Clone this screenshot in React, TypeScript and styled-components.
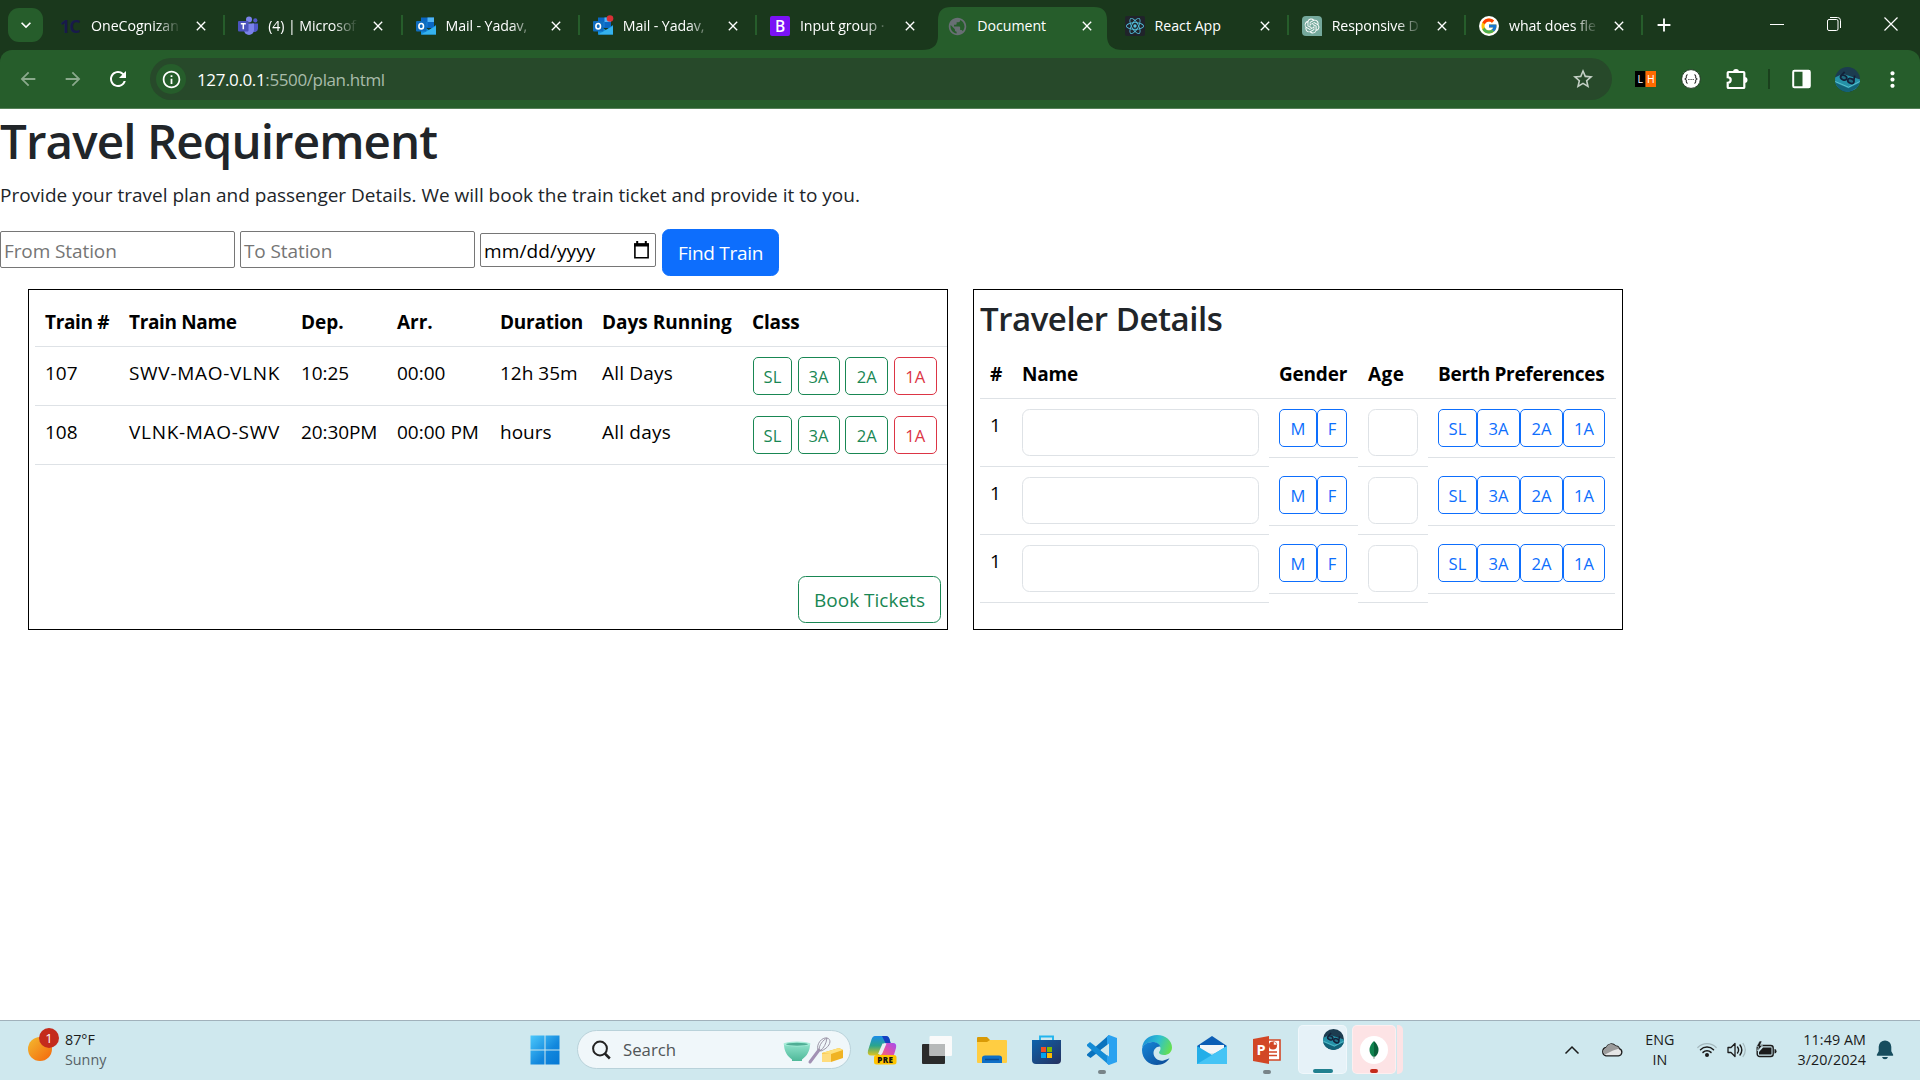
import React from "react";
import styled, { createGlobalStyle, css } from "styled-components";
import {
  MdAdd,
  MdArrowBack,
  MdArrowForward,
  MdClose,
  MdInfoOutline,
  MdKeyboardArrowDown,
  MdMoreVert,
  MdPublic,
  MdRefresh,
  MdStarOutline,
} from "react-icons/md";
import { FcGoogle } from "react-icons/fc";
import { SiOpenai, SiReact } from "react-icons/si";

const GlobalStyle = createGlobalStyle`
  *, *::before, *::after { box-sizing: border-box; }
  body { margin: 0; background: #fff; overflow: hidden; }
  svg { display: block; flex: none; overflow: visible; }
`;

const Screen = styled.div`
  display: flex;
  flex-direction: column;
  width: 1920px;
  height: 1080px;
  font-family: "Open Sans", "Noto Sans", sans-serif;
  color: #212529;
  white-space: nowrap;
`;

const Txt = styled.span<{ $track?: number }>`
  letter-spacing: ${(p) => p.$track ?? 0}px;
`;

/* ---------- browser chrome ---------- */

const TabStrip = styled.div`
  display: flex;
  align-items: flex-start;
  height: 50px;
  flex: none;
  padding-left: 8px;
  background: #1a381c;
  color: #fff;
`;

const TabSearch = styled.div`
  display: grid;
  place-items: center;
  width: 35px;
  height: 34px;
  margin: 8px 5px 0 0;
  border-radius: 11px;
  background: #265d2b;
`;

const Tab = styled.div<{ $divider?: boolean }>`
  position: relative;
  display: flex;
  align-items: center;
  width: 177.25px;
  height: 50px;
  padding: 1px 0 0 13px;
  flex: none;
  ${(p) =>
    p.$divider &&
    css`
      &::after {
        content: "";
        position: absolute;
        right: 0;
        top: 15px;
        width: 2px;
        height: 20px;
        background: #265d2b;
      }
    `}
`;

const ActiveShape = styled.svg`
  position: absolute;
  left: -12px;
  top: 7px;
`;

const Favicon = styled.div`
  position: relative;
  display: grid;
  place-items: center;
  width: 20px;
  height: 20px;
  margin-right: 10px;
`;

const TabTitle = styled.div<{ $fade?: boolean; $track?: number }>`
  position: relative;
  width: 90px;
  font-size: 14.2px;
  line-height: 20px;
  letter-spacing: ${(p) => p.$track ?? -0.2}px;
  ${(p) =>
    p.$fade &&
    css`
      mask-image: linear-gradient(90deg, #000 72%, transparent 100%);
    `}
`;

const TabClose = styled.div`
  position: relative;
  margin-left: 12px;
`;

const NewTab = styled.div`
  padding: 14px 0 0 10px;
`;

const WindowButtons = styled.div`
  display: flex;
  align-items: center;
  gap: 43px;
  margin-left: auto;
  padding: 17px 22px 0 0;
`;

const Toolbar = styled.div`
  display: flex;
  align-items: center;
  height: 59px;
  flex: none;
  border-bottom: 1px solid #568159;
  color: #fff;
  background: #265d2b;
`;

const ToolbarBack = styled.div`
  flex: none;
  background: #1a381c;

  & > div {
    clip-path: inset(0 round 12px 12px 0 0);
  }
`;

const NavButton = styled.div<{ $dim?: boolean }>`
  display: grid;
  place-items: center;
  width: 45px;
  color: ${(p) => (p.$dim ? "#8aa98c" : "#fff")};
`;

const Omnibox = styled.div`
  display: flex;
  align-items: center;
  width: 1462px;
  height: 42px;
  margin-left: 10px;
  padding: 0 17px 0 6px;
  border-radius: 21px;
  background: #27492a;
  font-size: 17px;
`;

const InfoChip = styled.div`
  display: grid;
  place-items: center;
  width: 30px;
  height: 30px;
  margin-right: 11px;
  border-radius: 50%;
  background: #265d2b;
`;

const UrlDim = styled.span`
  color: #a9bcaa;
`;

const StarSlot = styled.div`
  margin-left: auto;
  color: #c3cfc4;
`;

const Extensions = styled.div`
  display: flex;
  align-items: center;
  padding-left: 23px;
`;

const Gap = styled.div<{ $w: number }>`
  width: ${(p) => p.$w}px;
`;

const ToolbarRule = styled.div`
  width: 2px;
  height: 20px;
  background: #1a401d;
`;

/* ---------- page ---------- */

const Page = styled.main`
  flex: 1;
  min-height: 0;
  background: #fff;
`;

const Heading = styled.h1`
  margin: 0 0 10px;
  height: 60px;
  font-size: 47.5px;
  font-weight: 600;
  line-height: 63px;
  letter-spacing: -0.9px;
`;

const Lead = styled.p`
  margin: 0 0 20px;
  height: 30px;
  font-size: 19px;
  line-height: 33px;
`;

const SearchRow = styled.div`
  display: flex;
  align-items: flex-start;
  height: 47px;
`;

const StationField = styled.div`
  width: 235px;
  height: 37px;
  margin: 2px 5px 0 0;
  padding-left: 3px;
  border: 1px solid #767676;
  border-radius: 2px;
  font-size: 19px;
  line-height: 38px;
  letter-spacing: -0.1px;
  color: #757575;
`;

const DateField = styled.div`
  display: flex;
  align-items: center;
  justify-content: space-between;
  width: 176px;
  height: 34px;
  margin: 4px 6px 0 0;
  padding: 0 5px 0 3px;
  border: 1px solid #767676;
  border-radius: 2px;
  font-size: 19px;
  line-height: 32px;
  letter-spacing: 0.1px;
  color: #000;
`;

const DateText = styled.span`
  padding-top: 2px;
`;

const Button = styled.button<{ $tone: "primary" | "green" | "red" | "blue"; $small?: boolean; $w: number }>`
  flex: none;
  display: block;
  width: ${(p) => p.$w}px;
  height: ${(p) => (p.$small ? 38 : 47)}px;
  padding: 2px 0 0;
  border: 1px solid
    ${(p) => ({ primary: "#0d6efd", blue: "#0d6efd", green: "#198754", red: "#dc3545" })[p.$tone]};
  border-radius: ${(p) => (p.$small ? 5 : 7.5)}px;
  background: ${(p) => (p.$tone === "primary" ? "#0d6efd" : "transparent")};
  color: ${(p) => ({ primary: "#fff", blue: "#0d6efd", green: "#198754", red: "#dc3545" })[p.$tone]};
  font-family: inherit;
  font-size: ${(p) => (p.$small ? 16.6 : 19)}px;
  letter-spacing: ${(p) => (p.$tone === "primary" ? -0.3 : 0)}px;
  line-height: 1.5;
  text-align: center;
`;

const Panels = styled.div`
  display: flex;
  gap: 25px;
  padding: 13px 0 0 28px;
`;

const Panel = styled.section<{ $w: number }>`
  display: flex;
  flex-direction: column;
  width: ${(p) => p.$w}px;
  height: 341px;
  padding: 6px;
  border: 1px solid #000;
`;

const TrainRow = styled.div<{ $head?: boolean }>`
  display: grid;
  grid-template-columns: 84px 172px 96px 103px 102px 150px 205px;
  width: 912px;
  height: ${(p) => (p.$head ? 51 : 59)}px;
  padding-top: 10px;
  border-bottom: 1px solid #dee2e6;
  color: #000;
  font-size: 19px;
  font-weight: ${(p) => (p.$head ? 700 : 400)};
  line-height: 33px;
`;

const TrainCell = styled.div`
  padding-left: 10px;
`;

const ClassButtons = styled.div`
  display: flex;
  gap: 5.6px;
  padding-left: 11px;
`;

const PanelFooter = styled.div`
  display: flex;
  justify-content: flex-end;
  margin-top: auto;
`;

const PanelTitle = styled.h3`
  margin: 0 0 10px;
  height: 42px;
  font-size: 33px;
  font-weight: 600;
  line-height: 45px;
  letter-spacing: -0.45px;
`;

const TravelerRow = styled.div<{ $head?: boolean }>`
  display: grid;
  grid-template-columns: 32px 257px 89px 70px 187px;
  align-items: start;
  height: ${(p) => (p.$head ? 51 : 68)}px;
  color: #000;
  font-size: 19px;
  line-height: 33px;
  ${(p) =>
    p.$head &&
    css`
      padding-top: 10px;
      border-bottom: 1px solid #dee2e6;
      font-weight: 700;
    `}
`;

const HeadCell = styled.div`
  padding-left: 10px;
`;

const TravelerCell = styled.div<{ $short?: boolean; $top?: number }>`
  display: flex;
  height: ${(p) => (p.$short ? 59 : 68)}px;
  padding: ${(p) => p.$top ?? 10}px 0 0 10px;
  border-bottom: 1px solid #dee2e6;
`;

const RoundedInput = styled.div<{ $w: number }>`
  width: ${(p) => p.$w}px;
  height: 47px;
  border: 1px solid #dee2e6;
  border-radius: 7.5px;
`;

/* ---------- taskbar ---------- */

const Taskbar = styled.footer`
  display: flex;
  align-items: center;
  height: 60px;
  flex: none;
  padding-bottom: 2px;
  border-top: 1px solid #a1b1bb;
  background: #cfe8ee;
  font-size: 14.3px;
  color: #1b1b1b;
`;

const Weather = styled.div`
  display: flex;
  align-items: center;
  width: 530px;
  flex: none;
  padding-left: 28px;
  gap: 5px;
`;

const TwoLines = styled.div<{ $align?: string }>`
  display: flex;
  flex-direction: column;
  text-align: ${(p) => p.$align ?? "left"};
  line-height: 20px;
`;

const Muted = styled.span`
  color: #566166;
`;

const SearchPill = styled.div`
  display: flex;
  align-items: center;
  width: 274px;
  height: 39px;
  flex: none;
  margin: 0 16px 0 17px;
  padding: 0 6px 0 14px;
  border: 1px solid #b9d2da;
  border-radius: 20px;
  background: #f0f7fa;
  font-size: 16.8px;
  color: #505557;
`;

const SearchWord = styled.span`
  margin: 0 auto 0 12px;
`;

const AppSlot = styled.div<{ $last?: boolean }>`
  position: relative;
  display: grid;
  place-items: center;
  width: 30px;
  height: 30px;
  flex: none;
  margin-right: ${(p) => (p.$last ? 16 : 25)}px;
`;

const Running = styled.i<{ $w: number; $c: string; $inTile?: boolean }>`
  position: absolute;
  left: calc(50% - ${(p) => p.$w / 2}px);
  bottom: ${(p) => (p.$inTile ? 0 : -9)}px;
  width: ${(p) => p.$w}px;
  height: 4px;
  border-radius: 2px;
  background: ${(p) => p.$c};
`;

const AppTile = styled.div<{ $bg: string; $w: number }>`
  position: relative;
  display: flex;
  align-items: center;
  justify-content: center;
  width: ${(p) => p.$w}px;
  height: 49px;
  border: 1px solid #ffffff66;
  border-radius: 5px;
  background: ${(p) => p.$bg};
`;

const CornerAvatar = styled.div`
  position: absolute;
  right: 2px;
  top: 3px;
`;

const TileSliver = styled.div`
  width: 6px;
  height: 49px;
  margin-left: 1px;
  border-radius: 0 5px 5px 0;
  background: #fde3e5;
`;

const Tray = styled.div`
  display: flex;
  align-items: center;
  margin-left: auto;
  padding-right: 26px;
`;

/* ---------- drawings ---------- */

const Avatar = ({ size }: { size: number }) => (
  <svg width={size} height={size} viewBox="0 0 26 26">
    <clipPath id={`av${size}`}>
      <circle cx="13" cy="13" r="13" />
    </clipPath>
    <g clipPath={`url(#av${size})`}>
      <rect width="26" height="26" fill="#1c3c50" />
      <path d="M0 11 8 7l18 6v9L13 26 0 20z" fill="#2592a8" />
      <path d="M0 16l14 6 12-6v4l-13 7L0 22z" fill="#136277" />
      <path d="M0 15l14 6 12-6" stroke="#5cc2cf" fill="none" />
      <g fill="#1f6b80" stroke="#13213a" strokeWidth="1.800">
        <ellipse cx="9" cy="11" rx="3.400" ry="2.400" transform="rotate(25 9 11)" />
        <ellipse cx="16.500" cy="14.500" rx="3.400" ry="2.400" transform="rotate(25 16.500 14.500)" />
        <path d="M6 9.500 10 5M19.500 14l1-5" fill="none" />
      </g>
    </g>
  </svg>
);

const TeamsIcon = () => (
  <svg width="20" height="20" viewBox="0 0 20 20">
    <circle cx="11" cy="3.400" r="3" fill="#7b83eb" />
    <circle cx="17.300" cy="4.400" r="2.100" fill="#5059c9" />
    <path d="M14 7.500h6v5a3.500 3.500 0 0 1-6 2.500z" fill="#5059c9" />
    <path d="M6 7.500h10v6.500a5 5 0 0 1-10 0z" fill="#7b83eb" />
    <rect y="5" width="10.500" height="10.500" rx="1" fill="#4b53bc" />
    <path d="M2.800 7.800h5M5.300 7.800v5.400" stroke="#fff" strokeWidth="1.500" />
  </svg>
);

const OutlookIcon = ({ alert }: { alert?: boolean }) => (
  <svg width="20" height="20" viewBox="0 0 20 20">
    <path d="M5 1.500h13V12H5z" fill="#0a66c2" />
    <path d="M11.500 1.500H18V6h-6.500z" fill="#50b5f5" />
    <path d="M5 6h6.500v5H5z" fill="#1680d8" />
    <path d="M5 9l8 5 7-5v9.500H5z" fill="#1490df" />
    <path d="M5 18.500 20 10v8.500z" fill="#35b2ee" />
    <rect y="5" width="10.500" height="10.500" rx="1" fill="#0f6cbd" />
    <ellipse cx="5.200" cy="10.200" rx="2.300" ry="2.700" fill="none" stroke="#fff" strokeWidth="1.600" />
    {alert && <circle cx="17" cy="2.500" r="3.300" fill="#d93036" />}
  </svg>
);

const BootstrapIcon = () => (
  <svg width="20" height="20" viewBox="0 0 20 20">
    <rect width="20" height="20" rx="2" fill="#7a12f5" />
    <text x="10" y="15.600" textAnchor="middle" fontSize="15.500" fontWeight="600" fill="#fff">
      B
    </text>
  </svg>
);

const OneCIcon = () => (
  <svg width="20" height="20" viewBox="0 0 20 20">
    <text x="-1" y="16.500" fontSize="18" fontWeight="700" letterSpacing="-1" fill="#181a4a">
      1C
    </text>
  </svg>
);

const ReactFavicon = () => (
  <svg width="20" height="20" viewBox="0 0 20 20">
    <rect width="20" height="20" rx="2" fill="#20232a" />
    <SiReact x={1} y={1} size={18} color="#53c1de" />
  </svg>
);

const OpenAiFavicon = () => (
  <svg width="20" height="20" viewBox="0 0 20 20">
    <path d="M4 0h12a4 4 0 0 1 4 4v16H4a4 4 0 0 1-4-4V4a4 4 0 0 1 4-4z" fill="#75a99c" />
    <SiOpenai x={2.5} y={2.5} size={15} color="#fff" />
  </svg>
);

const GoogleFavicon = () => (
  <svg width="20" height="20" viewBox="0 0 20 20">
    <circle cx="10" cy="10" r="10" fill="#fff" />
    <FcGoogle x={1} y={1} size={18} />
  </svg>
);

const LhIcon = () => (
  <svg width="21" height="16" viewBox="0 0 21 16">
    <path d="M0 0h10.500v16H0z" fill="#000" />
    <path d="M10.500 0H21v16H10.500z" fill="#ff6a00" />
    <text x="2.400" y="11.800" fontSize="10.500" fill="#fff">
      L
    </text>
    <text x="12" y="12" fontSize="10.500" fill="#fff">
      H
    </text>
  </svg>
);

const BracesIcon = () => (
  <svg width="20" height="20" viewBox="0 0 20 20">
    <circle cx="10" cy="10" r="9.400" fill="#fff" stroke="#243b26" />
    <path
      d="M6.800 5.800q-1.500 0-1.500 1.400v1.600L4 10l1.300 1.200v1.600q0 1.400 1.500 1.400M13.200 5.800q1.500 0 1.500 1.400v1.600L16 10l-1.300 1.200v1.600q0 1.400-1.500 1.400"
      fill="none"
      stroke="#333"
      strokeWidth="1.100"
    />
    <path d="M7.300 10.500h1.200M9.500 10.500h1.200M11.600 10.500h1.200" stroke="#333" />
  </svg>
);

const PuzzleIcon = () => (
  <svg width="24" height="24" viewBox="0 0 24 24">
    <path
      d="M3.500 5h15q.8 0 .8.800v14.400q0 .8-.8.800h-15q-.8 0-.8-.8v-4.400q3-.3 3-2.800t-3-2.800V5.800q0-.8.800-.8z"
      fill="none"
      stroke="#fff"
      strokeWidth="2.200"
    />
    <path d="M8 5a3 3 0 0 1 6 0zM19.500 10a3 3 0 0 1 0 6z" fill="#fff" />
  </svg>
);

const SidePanelIcon = () => (
  <svg width="20" height="20" viewBox="0 0 20 20">
    <rect x="1.200" y="1.700" width="16.600" height="16.600" rx="1.200" fill="none" stroke="#fff" strokeWidth="2" />
    <path d="M10.500 1.500h7.500v17h-7.500z" fill="#fff" />
  </svg>
);

const CalendarIcon = () => (
  <svg width="17" height="19" viewBox="0 0 17 19">
    <path d="M1.900 3.200h13.200v13.500H1.900z" fill="none" stroke="#000" strokeWidth="1.600" />
    <path d="M1 2.300h15V5.500H1zM3.200 0h2v3h-2zM11.800 0h2v3h-2z" fill="#000" />
  </svg>
);

const WeatherIcon = () => (
  <svg width="32" height="38" viewBox="0 0 32 38">
    <defs>
      <linearGradient id="sun" x1="0" y1="0" x2="1" y2="1">
        <stop offset="0" stopColor="#f3bb30" />
        <stop offset="1" stopColor="#f4650b" />
      </linearGradient>
    </defs>
    <circle cx="12" cy="18" r="12" fill="url(#sun)" />
    <circle cx="21" cy="7" r="10" fill="#c42b1c" />
    <text x="21" y="11.800" textAnchor="middle" fontSize="13" fill="#fff">
      1
    </text>
  </svg>
);

const StartIcon = () => (
  <svg width="30" height="30" viewBox="0 0 30 30">
    <defs>
      <linearGradient id="win" x1="0" y1="0" x2="1" y2="1" gradientUnits="objectBoundingBox">
        <stop offset="0" stopColor="#4cc8fb" />
        <stop offset="0.600" stopColor="#1287dd" />
        <stop offset="1" stopColor="#0678d4" />
      </linearGradient>
    </defs>
    <path d="M.5.500h14v14h-14zM15.500.500h14v14h-14zM.5 15.500h14v14h-14zM15.500 15.500h14v14h-14z" fill="url(#win)" />
  </svg>
);

const MagnifierIcon = () => (
  <svg width="19" height="20" viewBox="0 0 19 20">
    <circle cx="8" cy="8.500" r="6.900" fill="none" stroke="#222" strokeWidth="2" />
    <path d="M12.800 13.500l5 5" stroke="#222" strokeWidth="2.500" />
  </svg>
);

const BakingIcon = () => (
  <svg width="61" height="28" viewBox="0 0 61 28">
    <defs>
      <linearGradient id="bowl" x1="0" y1="0" x2="0" y2="1">
        <stop offset="0" stopColor="#8fe3cb" />
        <stop offset="1" stopColor="#4fb899" />
      </linearGradient>
    </defs>
    <path d="M1 8h26c0 7-3 12-8 15.500v1.500h-10v-1.500C4 20 1 15 1 8z" fill="url(#bowl)" />
    <ellipse cx="14" cy="8" rx="13.500" ry="2.500" fill="#a6ecd8" />
    <ellipse cx="14" cy="8.300" rx="11" ry="1.500" fill="#4fae95" />
    <path d="M27 26l9-12" stroke="#a291b4" strokeWidth="3" strokeLinecap="round" />
    <g fill="none" stroke="#9c96a8" strokeWidth="1">
      <path d="M35 14c-2-6 4-13 9-12s4 9-6 13z" />
      <path d="M36 14c0-5 4-10 8-12-1 6-3 10-7 13" />
    </g>
    <path d="M39 17l17-5 4 2v8l-12 4-9 0z" fill="#f0b324" />
    <path d="M39 17l17-5 4 2-12 4z" fill="#ffe07a" />
    <path d="M39 17.500h9V26h-9z" fill="#ffdc7d" />
  </svg>
);

const CopilotIcon = () => (
  <svg width="30" height="30" viewBox="0 0 30 30">
    <defs>
      <linearGradient id="cpA" x1="0" y1="0" x2="0" y2="1">
        <stop offset="0" stopColor="#1b8ce8" />
        <stop offset="0.500" stopColor="#2aa58c" />
        <stop offset="1" stopColor="#e2c51c" />
      </linearGradient>
      <linearGradient id="cpB" x1="1" y1="0" x2="0" y2="1">
        <stop offset="0" stopColor="#a34df0" />
        <stop offset="0.500" stopColor="#dc4fae" />
        <stop offset="1" stopColor="#ff7355" />
      </linearGradient>
    </defs>
    <path d="M8 1h11q2.500 0 3.500 3l1 4h-6l-4 10q-1 2.500-4 2.500H4q-4 0-3-5l3.500-11Q5.500 1 8 1z" fill="url(#cpA)" />
    <path d="M15 1h4q2.500 0 3.500 3l1.200 4.500h-5z" fill="#153fc0" />
    <path d="M19 8h7q4 0 3 5l-3 10H13z" fill="url(#cpB)" />
    <path d="M15.500 8.500h4L15 19h-4z" fill="#e9eef2" />
    <rect x="7" y="20" width="22.500" height="9.500" rx="2.500" fill="#ffc400" />
    <text x="18.300" y="27.700" textAnchor="middle" fontSize="8" fontWeight="800" letterSpacing=".4" fill="#111">
      PRE
    </text>
  </svg>
);

const TaskViewIcon = () => (
  <svg width="30" height="30" viewBox="0 0 30 30">
    <rect y="9" width="23" height="20" rx="1" fill="#2b2b2b" />
    <rect x="7.500" y="1" width="22.500" height="20" rx="1" fill="#fafafa" />
    <path d="M7.500 9H23v12H7.500z" fill="#b7b9b9" />
  </svg>
);

const ExplorerIcon = () => (
  <svg width="30" height="30" viewBox="0 0 30 30">
    <path d="M0 3q0-1 1-1h9l3 3v4H0z" fill="#d99a06" />
    <path d="M0 7h10l3-2h16q1 0 1 1v21q0 1-1 1H1q-1 0-1-1z" fill="#ffcd42" />
    <path d="M5 28v-5q0-2.500 3-2.500h14q3 0 3 2.500v5z" fill="#0f6fc6" />
    <path d="M8 24.500h14" stroke="#0a4a90" strokeWidth="1.500" />
  </svg>
);

const StoreIcon = () => (
  <svg width="30" height="30" viewBox="0 0 30 30">
    <defs>
      <linearGradient id="bag" x1="0" y1="0" x2="1" y2="1">
        <stop offset="0" stopColor="#0d63ad" />
        <stop offset="1" stopColor="#26315e" />
      </linearGradient>
    </defs>
    <path d="M8 6V1.500h13V6" fill="none" stroke="#23b5ee" strokeWidth="1.900" />
    <path d="M0 5h29v20q0 4-4 4H4q-4 0-4-4z" fill="url(#bag)" />
    <path d="M9 12h5v5H9z" fill="#f25022" />
    <path d="M15 12h5v5h-5z" fill="#7fba00" />
    <path d="M9 18h5v5H9z" fill="#00a4ef" />
    <path d="M15 18h5v5h-5z" fill="#ffb900" />
  </svg>
);

const VsCodeIcon = () => (
  <svg width="30" height="30" viewBox="0 0 30 30">
    <path d="M22 0v9L3.500 23 0 20.500v-1.200z" fill="#0a72bd" />
    <path d="M0 9.500 3 7l19 15v8L0 11z" fill="#148bd6" />
    <path d="M22 0l8 3v24l-8 3-2-1.500V1.500z" fill="#2ba2f0" />
    <path d="M22 8.500 13.500 15 22 21.500z" fill="#cfe8ee" />
  </svg>
);

const EdgeIcon = () => (
  <svg width="30" height="30" viewBox="0 0 30 30">
    <defs>
      <linearGradient id="edgeTop" x1="0" y1="0.300" x2="1" y2="0.600">
        <stop offset="0" stopColor="#1a8fd8" />
        <stop offset="0.500" stopColor="#2fc0d0" />
        <stop offset="1" stopColor="#66e04e" />
      </linearGradient>
      <linearGradient id="edgeLow" x1="0" y1="0" x2="1" y2="1">
        <stop offset="0" stopColor="#1687d9" />
        <stop offset="1" stopColor="#0c4793" />
      </linearGradient>
    </defs>
    <path d="M0 13C1 5 7 0 15 0c9 0 15 6 15 12.500 0 5-4 7.500-8 7.500-3 0-5-1-5-2.500 0-1 1.500-1.500 1.500-4C18.500 10 15 7 10.500 7 6 7 2 9.500 0 13z" fill="url(#edgeTop)" />
    <path d="M0 15C0 10 5 7 10.500 7c4 0 7 2 7.800 4.500C15 11 11.500 14 11.500 18c0 5 5 8.500 10 7.500 2-.3 4-1.200 6-2.200C25 27.500 20 30 15 30 7 30 0 24 0 15z" fill="url(#edgeLow)" />
  </svg>
);

const MailIcon = () => (
  <svg width="30" height="30" viewBox="0 0 30 30">
    <path d="M0 11 15 1l15 10v4H0z" fill="#0d5eb5" />
    <path d="M3 10h24v8H3z" fill="#f4f6f8" />
    <path d="M0 11l15 9 15-9v18H0z" fill="#24aee8" />
    <path d="M0 29 30 11v18z" fill="#45c4f5" />
  </svg>
);

const PowerPointIcon = () => (
  <svg width="30" height="30" viewBox="0 0 30 30">
    <path d="M14 5h14v20H14z" fill="#fff" stroke="#d24726" strokeWidth="1.600" />
    <path d="M17 17h8M17 20.500h8" stroke="#d24726" strokeWidth="1.500" />
    <circle cx="21" cy="10.500" r="4" fill="#d24726" />
    <path d="M21.500 10V6.500a4 4 0 0 1 3.500 3.500z" fill="#fff" stroke="#d24726" strokeWidth=".6" />
    <path d="M1 4l16-3v28L1 26z" fill="#d24726" />
    <text x="4.500" y="20" fontSize="14.500" fontWeight="700" fill="#fff">
      P
    </text>
  </svg>
);

const LeafIcon = () => (
  <svg width="30" height="30" viewBox="0 0 30 30">
    <circle cx="15" cy="15" r="14" fill="#fff" />
    <path d="M15 6q-4.500 4-4.500 9T15 22.500z" fill="#10834f" />
    <path d="M15 6q4.500 4 4.500 9T15 22.500z" fill="#0a5f3a" />
    <path d="M15 21v3" stroke="#96ad9f" />
  </svg>
);

const CloudIcon = () => (
  <svg width="22" height="15" viewBox="0 0 22 15">
    <path d="M5 13.800h12.500a3.700 3.700 0 0 0 .8-7.200A4 4 0 0 0 14.500 4 5.500 5.500 0 0 0 5.200 5.400 4.300 4.300 0 0 0 5 13.800z" fill="#e6e6e6" stroke="#1c1c1c" strokeWidth="1.300" />
    <path d="M5.200 5.400A5.500 5.500 0 0 1 14.500 4a4 4 0 0 1 3.800 2.600L12 8.500 4 12.500Q0 9 5.200 5.400z" fill="#9b9b9b" />
  </svg>
);

const WifiIcon = () => (
  <svg width="20" height="17" viewBox="0 0 20 17">
    <g fill="none" strokeLinecap="round">
      <path d="M.8 6.500a13 13 0 0 1 18.400 0" stroke="#a4b8bd" strokeWidth="1.200" />
      <path d="M3.500 8.800a9.200 9.200 0 0 1 13 0M6 11.400a5.700 5.700 0 0 1 8 0" stroke="#1b1b1b" strokeWidth="1.500" />
    </g>
    <circle cx="10" cy="14" r="2" fill="#1b1b1b" />
  </svg>
);

const VolumeIcon = () => (
  <svg width="20" height="18" viewBox="0 0 20 18">
    <path d="M1 6.500h3L8 2.500v13l-4-4H1z" fill="none" stroke="#1b1b1b" strokeWidth="1.300" strokeLinejoin="round" />
    <path d="M10.500 6q2.200 3 0 6M13 4q3.600 5 0 10" fill="none" stroke="#1b1b1b" strokeWidth="1.400" strokeLinecap="round" />
    <path d="M15.800 2q5 7 0 14" fill="none" stroke="#a4b8bd" strokeWidth="1.200" />
  </svg>
);

const BatteryIcon = () => (
  <svg width="21" height="18" viewBox="0 0 21 18">
    <rect x="1.200" y="4.500" width="16" height="11" rx="2.500" fill="none" stroke="#1b1b1b" strokeWidth="1.400" />
    <path d="M7 6.500h8.500v7H3V11z" fill="#1b1b1b" />
    <path d="M18.500 8q2 0 2 2.200t-2 2.200z" fill="#1b1b1b" />
    <path d="M3.500 0 .5 5.500h2L1.500 10l5-5.500h-2.300L6 0z" fill="#1b1b1b" stroke="#cfe8ee" strokeWidth=".6" />
  </svg>
);

const BellIcon = () => (
  <svg width="18" height="20" viewBox="0 0 18 20">
    <path d="M9 .5a6.300 6.300 0 0 1 6.300 6.300v4.400l1.900 3.600q.3 1-.7 1h-15q-1 0-.7-1l1.900-3.600V6.800A6.300 6.300 0 0 1 9 .5z" fill="#174d5e" />
    <path d="M6 17h6q-.6 2.300-3 2.300T6 17z" fill="#174d5e" />
  </svg>
);

/* ---------- data ---------- */

interface TabInfo {
  title: string;
  icon: React.ReactNode;
  fade?: boolean;
  active?: boolean;
  divider?: boolean;
  track?: number;
}

const tabs: TabInfo[] = [
  { title: "OneCognizan", icon: <OneCIcon />, fade: true, divider: true, track: -0.05 },
  { title: "(4) | Microsof", icon: <TeamsIcon />, fade: true, divider: true, track: -0.1 },
  { title: "Mail - Yadav,", icon: <OutlookIcon />, fade: true, divider: true, track: -0.1 },
  { title: "Mail - Yadav,", icon: <OutlookIcon alert />, fade: true, divider: true, track: -0.1 },
  { title: "Input group ·", icon: <BootstrapIcon />, fade: true, track: -0.1 },
  { title: "Document", icon: <MdPublic size={21} color="#686f74" />, active: true, track: -0.05 },
  { title: "React App", icon: <ReactFavicon />, divider: true, track: 0 },
  { title: "Responsive D", icon: <OpenAiFavicon />, fade: true, divider: true, track: -0.15 },
  { title: "what does fle", icon: <GoogleFavicon />, fade: true, divider: true, track: -0.1 },
];

const trainHeads: [string, number][] = [
  ["Train #", -0.35],
  ["Train Name", -0.35],
  ["Dep.", 0],
  ["Arr.", 0],
  ["Duration", -0.25],
  ["Days Running", 0],
  ["Class", -0.15],
];

const travelerHeads: [string, number][] = [
  ["#", 0],
  ["Name", -0.2],
  ["Gender", -0.2],
  ["Age", 0.4],
  ["Berth Preferences", -0.3],
];

const trains = [
  ["107", "SWV-MAO-VLNK", "10:25", "00:00", "12h 35m", "All Days"],
  ["108", "VLNK-MAO-SWV", "20:30PM", "00:00 PM", "hours", "All days"],
];

const cellTrack = [0, 0.7, -0.1, 0, 0, 0.2];

const classes: { label: string; w: number; tone: "green" | "red" }[] = [
  { label: "SL", w: 39, tone: "green" },
  { label: "3A", w: 42, tone: "green" },
  { label: "2A", w: 43, tone: "green" },
  { label: "1A", w: 43, tone: "red" },
];

const berths: [string, number][] = [
  ["SL", 39],
  ["3A", 43],
  ["2A", 43],
  ["1A", 42],
];

export default function App() {
  return (
    <Screen>
      <GlobalStyle />
      <TabStrip>
        <TabSearch>
          <MdKeyboardArrowDown size={20} />
        </TabSearch>
        {tabs.map((t, i) => (
          <Tab key={i} $divider={t.divider}>
            {t.active && (
              <ActiveShape width="201" height="43" viewBox="0 0 201 43">
                <path d="M0 43q16 0 16-14V13Q16 0 29 0h143q13 0 13 13v16q0 14 16 14z" fill="#265d2b" />
              </ActiveShape>
            )}
            <Favicon>{t.icon}</Favicon>
            <TabTitle $fade={t.fade} $track={t.track}>
              {t.title}
            </TabTitle>
            <TabClose>
              <MdClose size={16} />
            </TabClose>
          </Tab>
        ))}
        <NewTab>
          <MdAdd size={22} />
        </NewTab>
        <WindowButtons>
          <svg width="14" height="14" viewBox="0 0 14 14">
            <path d="M0 7.500h14" stroke="#fff" />
          </svg>
          <svg width="14" height="14" viewBox="0 0 14 14">
            <rect x=".5" y="2.500" width="10.500" height="11" rx="1.500" fill="none" stroke="#fff" />
            <path d="M3 .5h7.500q3 0 3 3V11" fill="none" stroke="#fff" />
          </svg>
          <svg width="14" height="14" viewBox="0 0 14 14">
            <path d="M.5.500l13 13M13.500.500l-13 13" stroke="#fff" strokeWidth="1.200" />
          </svg>
        </WindowButtons>
      </TabStrip>
      <ToolbarBack>
        <Toolbar>
          <Gap $w={5} />
          <NavButton $dim>
            <MdArrowBack size={22} />
          </NavButton>
          <NavButton $dim>
            <MdArrowForward size={22} />
          </NavButton>
          <NavButton>
            <MdRefresh size={24} />
          </NavButton>
          <Omnibox>
            <InfoChip>
              <MdInfoOutline size={21} />
            </InfoChip>
            <Txt $track={-0.38}>
              127.0.0.1<UrlDim>:5500/plan.html</UrlDim>
            </Txt>
            <StarSlot>
              <MdStarOutline size={24} />
            </StarSlot>
          </Omnibox>
          <Extensions>
            <LhIcon />
            <Gap $w={25} />
            <BracesIcon />
            <Gap $w={24} />
            <PuzzleIcon />
            <Gap $w={19} />
            <ToolbarRule />
            <Gap $w={22} />
            <SidePanelIcon />
            <Gap $w={23} />
            <Avatar size={25} />
            <Gap $w={20} />
            <MdMoreVert size={25} />
          </Extensions>
        </Toolbar>
      </ToolbarBack>

      <Page>
        <Heading>Travel Requirement</Heading>
        <Lead>Provide your travel plan and passenger Details. We will book the train ticket and provide it to you.</Lead>
        <SearchRow>
          <StationField>From Station</StationField>
          <StationField>To Station</StationField>
          <DateField>
            <DateText>mm/dd/yyyy</DateText>
            <CalendarIcon />
          </DateField>
          <Button $tone="primary" $w={117}>
            Find Train
          </Button>
        </SearchRow>
        <Panels>
          <Panel $w={920}>
            <TrainRow $head>
              {trainHeads.map(([h, track]) => (
                <TrainCell key={h}>
                  <Txt $track={track}>{h}</Txt>
                </TrainCell>
              ))}
            </TrainRow>
            {trains.map((row) => (
              <TrainRow key={row[0]}>
                {row.map((c, i) => (
                  <TrainCell key={i}>
                    <Txt $track={cellTrack[i]}>{c}</Txt>
                  </TrainCell>
                ))}
                <ClassButtons>
                  {classes.map((c) => (
                    <Button key={c.label} $small $tone={c.tone} $w={c.w}>
                      {c.label}
                    </Button>
                  ))}
                </ClassButtons>
              </TrainRow>
            ))}
            <PanelFooter>
              <Button $tone="green" $w={143}>
                Book Tickets
              </Button>
            </PanelFooter>
          </Panel>
          <Panel $w={650}>
            <PanelTitle>Traveler Details</PanelTitle>
            <TravelerRow $head>
              {travelerHeads.map(([h, track]) => (
                <HeadCell key={h}>
                  <Txt $track={track}>{h}</Txt>
                </HeadCell>
              ))}
            </TravelerRow>
            {[0, 1, 2].map((n) => (
              <TravelerRow key={n}>
                <TravelerCell>1</TravelerCell>
                <TravelerCell>
                  <RoundedInput $w={237} />
                </TravelerCell>
                <TravelerCell $short $top={n ? 9 : 10}>
                  <Button $small $tone="blue" $w={38}>
                    M
                  </Button>
                  <Button $small $tone="blue" $w={30}>
                    F
                  </Button>
                </TravelerCell>
                <TravelerCell>
                  <RoundedInput $w={50} />
                </TravelerCell>
                <TravelerCell $short $top={n ? 9 : 10}>
                  {berths.map(([b, w]) => (
                    <Button key={b} $small $tone="blue" $w={w}>
                      {b}
                    </Button>
                  ))}
                </TravelerCell>
              </TravelerRow>
            ))}
          </Panel>
        </Panels>
      </Page>

      <Taskbar>
        <Weather>
          <WeatherIcon />
          <TwoLines>
            <span>87°F</span>
            <Muted>Sunny</Muted>
          </TwoLines>
        </Weather>
        <StartIcon />
        <SearchPill>
          <MagnifierIcon />
          <SearchWord>Search</SearchWord>
          <BakingIcon />
        </SearchPill>
        <AppSlot><CopilotIcon /></AppSlot>
        <AppSlot><TaskViewIcon /></AppSlot>
        <AppSlot><ExplorerIcon /></AppSlot>
        <AppSlot><StoreIcon /></AppSlot>
        <AppSlot>
          <VsCodeIcon />
          <Running $w={8} $c="#788488" />
        </AppSlot>
        <AppSlot><EdgeIcon /></AppSlot>
        <AppSlot><MailIcon /></AppSlot>
        <AppSlot $last>
          <PowerPointIcon />
          <Running $w={8} $c="#788488" />
        </AppSlot>
        <AppTile $bg="#e6f2f8" $w={49}>
          <CornerAvatar>
            <Avatar size={21} />
          </CornerAvatar>
          <Running $inTile $w={20} $c="#21808f" />
        </AppTile>
        <Gap $w={5} />
        <AppTile $bg="#fde3e5" $w={44}>
          <LeafIcon />
          <Running $inTile $w={8} $c="#c42b1c" />
        </AppTile>
        <TileSliver />
        <Tray>
          <svg width="16" height="10" viewBox="0 0 16 10">
            <path d="M1.500 8.500 8 2l6.500 6.500" fill="none" stroke="#1b1b1b" strokeWidth="1.500" />
          </svg>
          <Gap $w={21} />
          <CloudIcon />
          <Gap $w={22} />
          <TwoLines $align="center">
            <span>ENG</span>
            <span>IN</span>
          </TwoLines>
          <Gap $w={23} />
          <WifiIcon />
          <Gap $w={10} />
          <VolumeIcon />
          <Gap $w={9} />
          <BatteryIcon />
          <Gap $w={20} />
          <TwoLines $align="right">
            <Txt $track={0.08}>11:49 AM</Txt>
            <Txt $track={0.1}>3/20/2024</Txt>
          </TwoLines>
          <Gap $w={10} />
          <BellIcon />
        </Tray>
      </Taskbar>
    </Screen>
  );
}
